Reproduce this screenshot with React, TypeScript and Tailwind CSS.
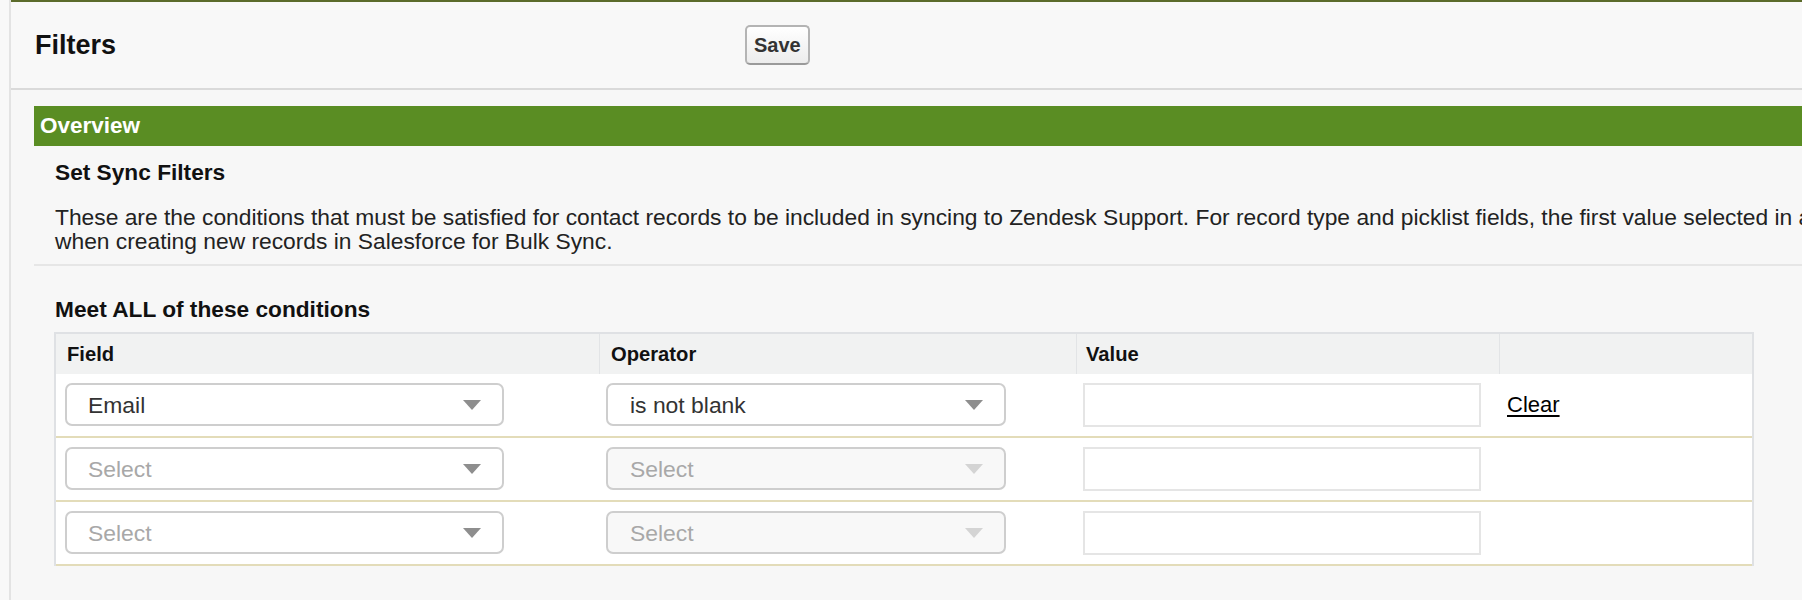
import React from "react";

type DropProps = {
  text?: string;
  placeholder: string;
  kind: "field" | "op";
  disabled?: boolean;
};

function Arrow({ light }: { light?: boolean }) {
  return (
    <svg
      width="18"
      height="10"
      viewBox="0 0 18 10"
      className="absolute right-[21px] top-1/2 -translate-y-1/2"
    >
      <polygon points="0,0 18,0 9,10" fill={light ? "#d4d4d4" : "#8e8e8e"} />
    </svg>
  );
}

function Dropdown({ text, placeholder, kind, disabled }: DropProps) {
  const base =
    "relative h-[43px] rounded-[7px] border-2 border-[#cecece] flex items-center text-[22.9px] leading-[26px]";
  const size = kind === "field" ? "w-[439px] pl-[21px]" : "w-[400px] pl-[22px]";
  const bg = disabled ? "bg-[#f8f8f8]" : "bg-white";
  const color = text ? "text-[#333333]" : "text-[#a8a8a8]";
  return (
    <div className={`${base} ${size} ${bg} ${color}`}>
      <span>{text ?? placeholder}</span>
      <Arrow light={disabled} />
    </div>
  );
}

const rows = [
  { field: "Email", op: "is not blank", clear: true },
  { field: undefined, op: undefined, clear: false },
  { field: undefined, op: undefined, clear: false },
];

export default function App() {
  return (
    <div className="w-[1802px] h-[600px] overflow-hidden bg-[#f8f8f8] font-['Liberation_Sans',Arial,sans-serif] text-black">
      <div className="ml-[9px] w-[2400px] h-[600px] border-l-2 border-[#e3e3e3] bg-[#f7f7f7]">
        <div className="h-[2px] bg-[#5b6b2b]" />
        {/* Header */}
        <div className="h-[88px] border-b-2 border-[#dadada] flex items-center pl-[24px] bg-[#f8f8f8]">
          <div className="w-[710px] text-[27px] leading-[30px] font-bold text-[#111]">Filters</div>
          <button className="h-[40px] px-[7px] rounded-[5px] border-2 border-[#b4b4b4] border-b-[#9a9a9a] bg-linear-to-b from-white to-[#ececec] text-[20px] leading-[24px] font-bold text-[#333]">
            Save
          </button>
        </div>

        {/* Content */}
        <div className="pl-[23px] pt-[16px]">
          <div className="h-[40px] bg-[#5a8d23] flex items-center pl-[6px] text-white text-[22.5px] leading-[26px] font-bold">
            Overview
          </div>

          <div className="border-b-2 border-[#e6e6e6] pb-[11px]">
            <div className="pl-[21px] pt-[13px] text-[22.7px] leading-[26px] font-bold text-[#111]">
              Set Sync Filters
            </div>
            <div className="pl-[21px] pt-[20px] text-[22.8px] leading-[24px] text-[#222] whitespace-nowrap">
              <div>
                These are the conditions that must be satisfied for contact records to be included in syncing to
                Zendesk Support. For record type and picklist fields, the first value selected in a filter will be
                used as the default value
              </div>
              <div>when creating new records in Salesforce for Bulk Sync.</div>
            </div>
          </div>

          <div className="pl-[20px]">
            <div className="pt-[30px] pl-[1px] text-[22.7px] leading-[26px] font-bold text-[#111]">
              Meet ALL of these conditions
            </div>

            <div className="mt-[10px] w-[1700px] border-t-2 border-x-2 border-[#dfe1e4]">
              <div className="grid grid-cols-[543px_477px_423px_253px] h-[40px] bg-[#f1f2f2] text-[20.2px] leading-[24px] font-bold text-[#111]">
                <div className="flex items-center pl-[11px]">Field</div>
                <div className="flex items-center pl-[11px] border-l border-[#e2e4e6]">Operator</div>
                <div className="flex items-center pl-[9px] border-l border-[#e2e4e6]">Value</div>
                <div className="border-l border-[#e2e4e6]" />
              </div>

              {rows.map((r, i) => (
                <div
                  key={i}
                  className="grid grid-cols-[543px_477px_423px_253px] h-[64px] border-b-2 border-[#e3dcb9] bg-white"
                >
                  <div className="pl-[9px] pt-[9px]">
                    <Dropdown kind="field" text={r.field} placeholder="Select" />
                  </div>
                  <div className="pl-[7px] pt-[9px]">
                    <Dropdown kind="op" text={r.op} placeholder="Select" disabled={!r.op} />
                  </div>
                  <div className="pl-[7px] pt-[9px]">
                    <div className="w-[398px] h-[44px] border-2 border-[#e5e5e5] bg-white" />
                  </div>
                  <div className="pl-[8px] pt-[9px]">
                    {r.clear && (
                      <div className="h-[43px] flex items-center">
                        <a className="text-[22px] leading-[26px] text-black underline underline-offset-[3px] cursor-pointer">
                          Clear
                        </a>
                      </div>
                    )}
                  </div>
                </div>
              ))}
            </div>
          </div>
        </div>
      </div>
    </div>
  );
}
